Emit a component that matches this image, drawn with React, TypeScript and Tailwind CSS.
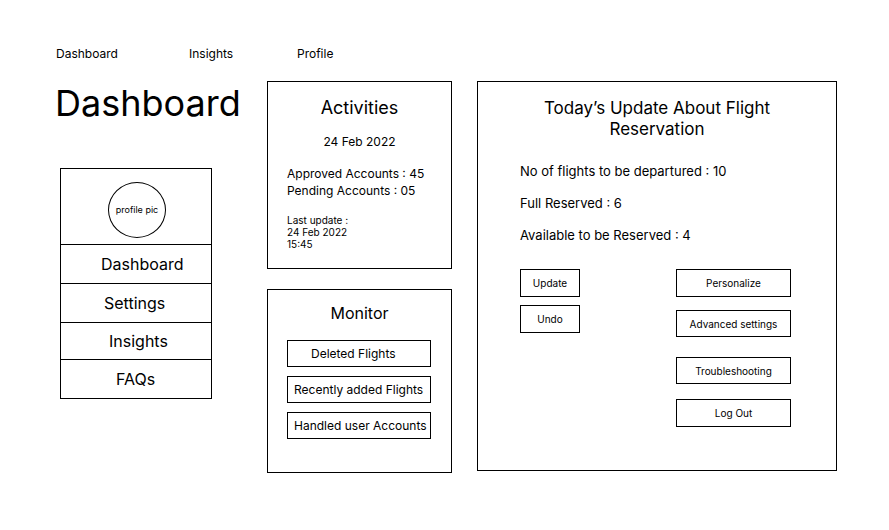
import React from "react";

const stats = [
  "No of flights to be departured : 10",
  "Full Reserved : 6",
  "Available to be Reserved : 4",
];

function Btn({ label, className }: { label: string; className?: string }) {
  return (
    <div
      className={
        "flex items-center justify-center border border-black text-[10px] leading-none " +
        (className ?? "")
      }
    >
      {label}
    </div>
  );
}

export default function App() {
  return (
    <div className="w-[889px] h-[530px] bg-white text-black font-['Inter',sans-serif] overflow-hidden">
      {/* top nav */}
      <nav className="flex pt-[46px] pl-[56px] text-[12px] leading-[16px]">
        <span className="w-[133px]">Dashboard</span>
        <span className="w-[108px]">Insights</span>
        <span>Profile</span>
      </nav>

      <div className="flex mt-[19px] pl-[55px]">
        {/* left column */}
        <div className="w-[212px]">
          <h1 className="mt-[4px] text-[36px] leading-[36px] font-normal">Dashboard</h1>
          <div className="mt-[47px] ml-[5px] w-[152px] border border-black">
            <div className="h-[75px] pt-[13px] pl-[47px]">
              <div className="w-[58px] h-[56px] rounded-[50%] border border-black flex items-center justify-center text-[9px]">
                profile pic
              </div>
            </div>
            <div className="h-[39px] border-t border-black flex items-center pl-[40px] text-[16px]">
              Dashboard
            </div>
            <div className="h-[39px] border-t border-black flex items-center pl-[43px] text-[16px]">
              Settings
            </div>
            <div className="h-[37px] border-t border-black flex items-center pl-[48px] text-[16px]">
              Insights
            </div>
            <div className="h-[39px] border-t border-black flex items-center pl-[55px] text-[16px]">
              FAQs
            </div>
          </div>
        </div>

        {/* middle column */}
        <div className="w-[185px] flex flex-col gap-[20px]">
          <section className="h-[188px] border border-black pt-[14px]">
            <h2 className="text-center text-[18px] leading-[24px]">Activities</h2>
            <p className="mt-[14px] text-center text-[12px] leading-[16px]">24 Feb 2022</p>
            <div className="mt-[15px] pl-[19px] text-[12px] leading-[17px]">
              <p>Approved Accounts : 45</p>
              <p>Pending Accounts : 05</p>
            </div>
            <div className="mt-[15px] pl-[19px] text-[10px] leading-[12px]">
              <p>Last update :</p>
              <p>24 Feb 2022</p>
              <p>15:45</p>
            </div>
          </section>

          <section className="h-[184px] border border-black pt-[13px]">
            <h2 className="text-center text-[16px] leading-[20px]">Monitor</h2>
            <div className="mt-[17px] ml-[19px] flex flex-col gap-[9px] text-[12px]">
              <div className="w-[144px] h-[27px] border border-black flex items-center pl-[23px]">
                Deleted Flights
              </div>
              <div className="w-[144px] h-[27px] border border-black flex items-center pl-[6px]">
                Recently added Flights
              </div>
              <div className="w-[144px] h-[27px] border border-black flex items-center pl-[6px]">
                Handled user Accounts
              </div>
            </div>
          </section>
        </div>

        {/* right panel */}
        <section className="ml-[25px] w-[360px] h-[390px] border border-black pt-[16px]">
          <h2 className="text-center text-[17px] leading-[21px]">
            Today’s Update About Flight
            <br />
            Reservation
          </h2>
          <div className="mt-[23px] pl-[42px] flex flex-col gap-[16px] text-[13px] leading-[16px]">
            {stats.map((s) => (
              <p key={s}>{s}</p>
            ))}
          </div>
          <div className="mt-[26px] pl-[42px] flex">
            <div className="flex flex-col gap-[8px]">
              <Btn label="Update" className="w-[60px] h-[28px]" />
              <Btn label="Undo" className="w-[60px] h-[28px]" />
            </div>
            <div className="ml-[96px] flex flex-col">
              <Btn label="Personalize" className="w-[115px] h-[28px]" />
              <Btn label="Advanced settings" className="mt-[13px] w-[115px] h-[27px]" />
              <Btn label="Troubleshooting" className="mt-[20px] w-[115px] h-[27px]" />
              <Btn label="Log Out" className="mt-[15px] w-[115px] h-[28px]" />
            </div>
          </div>
        </section>
      </div>
    </div>
  );
}
